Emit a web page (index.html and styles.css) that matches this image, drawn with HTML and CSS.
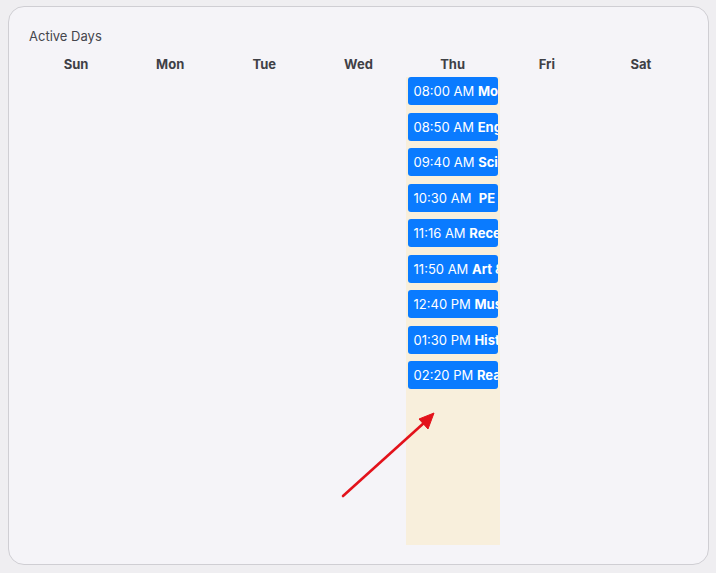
FILE: index.html
```html
<!DOCTYPE html>
<html>
<head>
<meta charset="utf-8">
<link rel="stylesheet" href="styles.css">
</head>
<body>
<div class="card">
  <div class="title">Active Days</div>
  <div class="week">
    <div class="day"><div class="day-name">Sun</div><div class="day-body"></div></div>
    <div class="day"><div class="day-name">Mon</div><div class="day-body"></div></div>
    <div class="day"><div class="day-name">Tue</div><div class="day-body"></div></div>
    <div class="day"><div class="day-name">Wed</div><div class="day-body"></div></div>
    <div class="day"><div class="day-name">Thu</div>
      <div class="day-body active">
        <div class="event">08:00 AM <b>Morning Assembly</b></div>
        <div class="event">08:50 AM <b>English</b></div>
        <div class="event">09:40 AM <b>Science</b></div>
        <div class="event">10:30 AM &nbsp;<b>PE</b></div>
        <div class="event">11:16 AM <b>Recess</b></div>
        <div class="event">11:50 AM <b>Art &amp; Craft</b></div>
        <div class="event">12:40 PM <b>Music</b></div>
        <div class="event">01:30 PM <b>History</b></div>
        <div class="event">02:20 PM <b>Reading</b></div>
      </div>
    </div>
    <div class="day"><div class="day-name">Fri</div><div class="day-body"></div></div>
    <div class="day"><div class="day-name">Sat</div><div class="day-body"></div></div>
  </div>
  <svg class="arrow" width="120" height="110" viewBox="0 0 120 110">
    <line x1="8" y1="94" x2="90" y2="20" stroke="#e3121b" stroke-width="2.6" stroke-linecap="round"/>
    <polygon points="99,11 84,17 93,27" fill="#e3121b" stroke="#e3121b" stroke-width="1" stroke-linejoin="round"/>
  </svg>
</div>
</body>
</html>
```
FILE: styles.css
```css
html, body {
  margin: 0;
  padding: 0;
}
body {
  background: #efeef1;
  padding: 6px 7px 8px 8px;
  font-family: "Inter", "Open Sans", "Liberation Sans", sans-serif;
  width: 716px;
  height: 573px;
  box-sizing: border-box;
}
.card {
  position: relative;
  background: #f5f4f8;
  border: 1px solid #cfced3;
  border-radius: 16px;
  padding: 19px 20px 18px 20px;
  height: 559px;
  box-sizing: border-box;
}
.title {
  font-size: 13px;
  line-height: 20px;
  color: #45464d;
}
.week {
  display: grid;
  grid-template-columns: repeat(7, minmax(0, 1fr));
  margin-top: 8px;
}
.day {
  min-width: 0;
}
.day-name {
  text-align: center;
  font-weight: 700;
  font-size: 13px;
  line-height: 20px;
  color: #3f4046;
}
.day-body {
  margin-top: 3px;
  height: 468px;
  padding: 0 2px;
}
.day-body.active {
  background: #f8efdc;
}
.event {
  background: #0a7bff;
  color: #fff;
  border-radius: 3px;
  height: 28px;
  line-height: 28px;
  margin-bottom: 7.5px;
  padding: 0 0 0 6px;
  font-size: 13px;
  white-space: nowrap;
  overflow: hidden;
}
.event b {
  font-weight: 700;
}
.arrow {
  position: absolute;
  left: 326px;
  top: 395px;
}
```
